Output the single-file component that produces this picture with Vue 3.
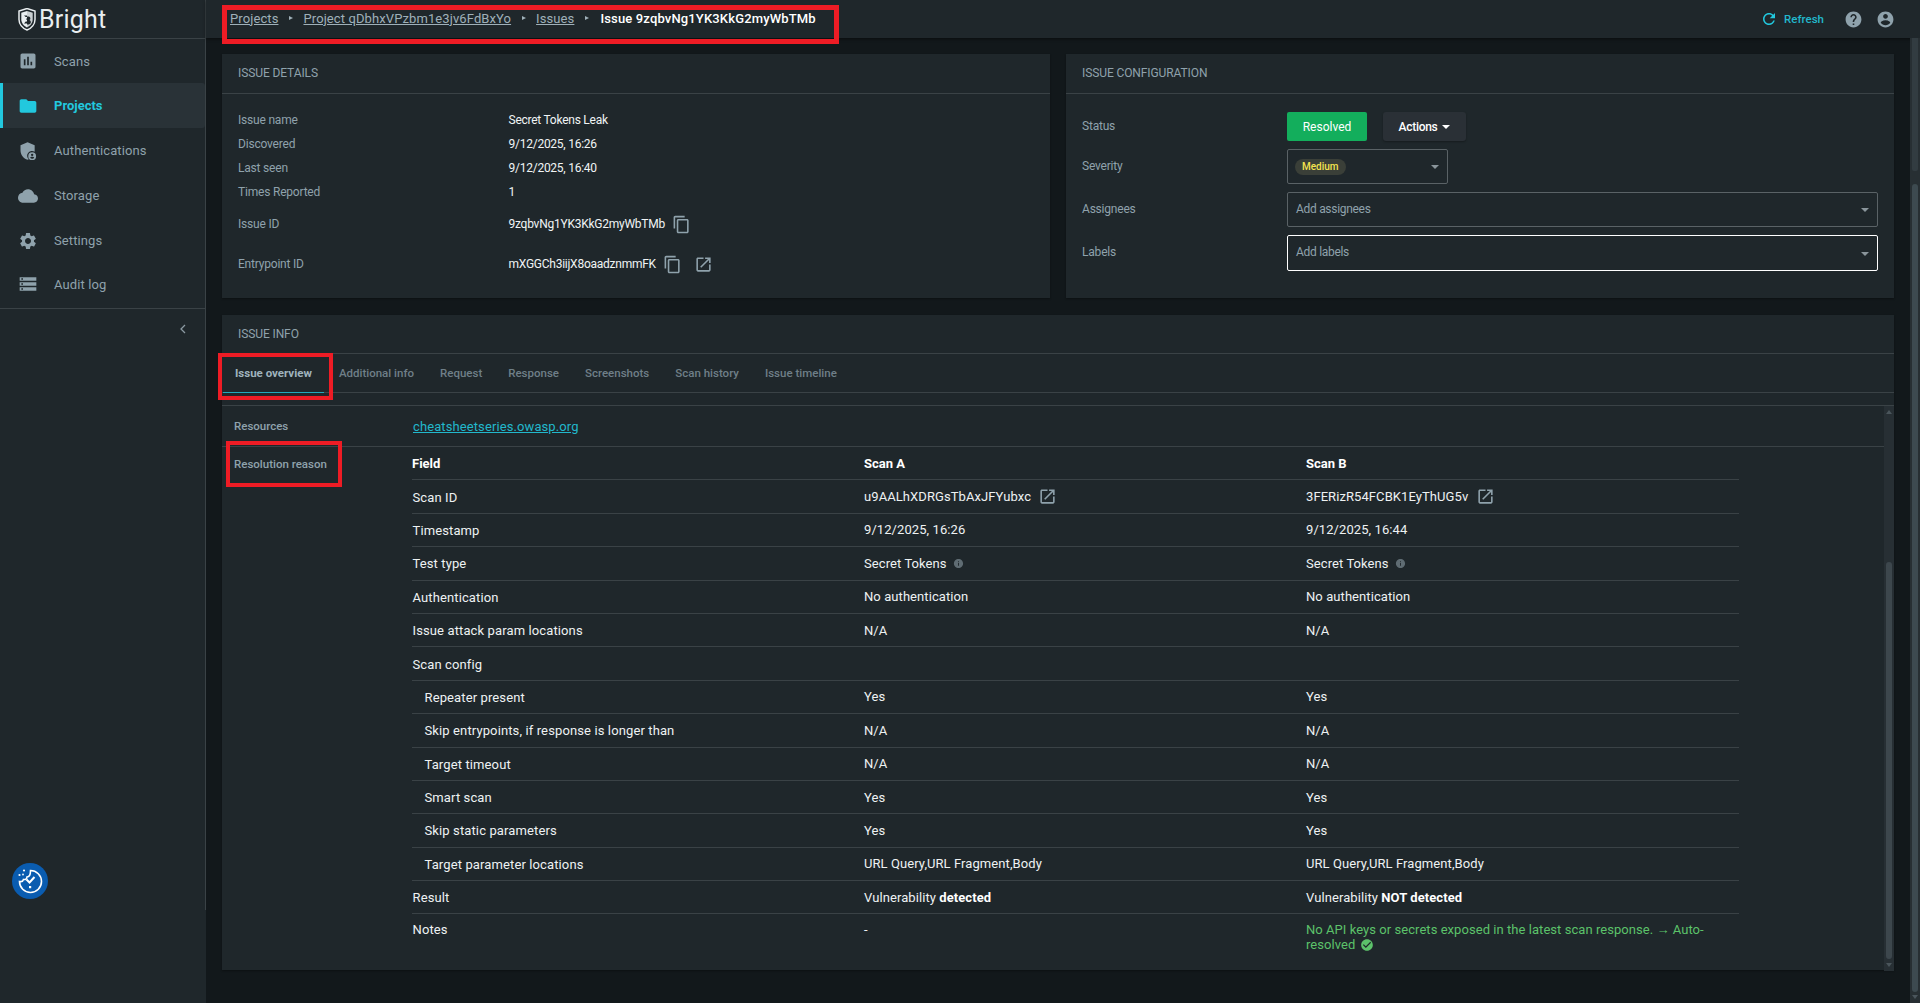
<script setup>
const P = {
  scans: 'M19 3H5c-1.1 0-2 .9-2 2v14c0 1.1.9 2 2 2h14c1.1 0 2-.9 2-2V5c0-1.1-.9-2-2-2zM9 17H7v-7h2v7zm4 0h-2V7h2v10zm4 0h-2v-4h2v4z',
  folder: 'M10 4H4c-1.1 0-1.99.9-1.99 2L2 18c0 1.1.9 2 2 2h16c1.1 0 2-.9 2-2V8c0-1.1-.9-2-2-2h-8l-2-2z',
  auth: 'M11.5 1.5L3 5v6c0 5.3 3.6 10.2 8.5 11.5.5-.1 1-.3 1.5-.5-1.2-1-2-2.5-2-4.2 0-3.2 2.6-5.8 5.8-5.8 1.1 0 2.2.3 3.2.9V5l-8.500-3.500zM17 13.500a4.700 4.700 0 1 0 0 9.400 4.700 4.700 0 0 0 0-9.400zm0 1.700a1.400 1.400 0 1 1 0 2.800 1.400 1.400 0 0 1 0-2.800zm0 6c-1 0-1.900-.5-2.400-1.200.1-.8 1.600-1.200 2.400-1.200s2.300.4 2.400 1.200c-.5.700-1.400 1.200-2.400 1.200z',
  cloud: 'M19.35 10.04C18.67 6.59 15.64 4 12 4 9.11 4 6.6 5.64 5.35 8.04 2.34 8.36 0 10.91 0 14c0 3.31 2.69 6 6 6h13c2.76 0 5-2.24 5-5 0-2.64-2.05-4.78-4.65-4.96z',
  gear: 'M19.14 12.94c.04-.3.06-.61.06-.94 0-.32-.02-.64-.07-.94l2.03-1.58c.18-.14.23-.41.12-.61l-1.92-3.32c-.12-.22-.37-.29-.59-.22l-2.39.96c-.5-.38-1.03-.7-1.62-.94l-.36-2.54c-.04-.24-.24-.41-.48-.41h-3.84c-.24 0-.43.17-.47.41l-.36 2.54c-.59.24-1.13.57-1.62.94l-2.39-.96c-.22-.08-.47 0-.59.22L2.74 8.87c-.12.21-.08.47.12.61l2.03 1.58c-.05.3-.09.63-.09.94s.02.64.07.94l-2.03 1.58c-.18.14-.23.41-.12.61l1.92 3.32c.12.22.37.29.59.22l2.39-.96c.5.38 1.03.7 1.62.94l.36 2.54c.05.24.24.41.48.41h3.84c.24 0 .44-.17.47-.41l.36-2.54c.59-.24 1.13-.56 1.62-.94l2.39.96c.22.08.47 0 .59-.22l1.92-3.32c.12-.22.07-.47-.12-.61l-2.01-1.58zM12 15.6c-1.98 0-3.6-1.62-3.6-3.6s1.62-3.6 3.6-3.6 3.6 1.62 3.6 3.6-1.62 3.6-3.6 3.6z',
  log: 'M2 20h20v-4H2v4zm2-3h2v2H4v-2zM2 4v4h20V4H2zm4 3H4V5h2v2zm-4 7h20v-4H2v4zm2-3h2v2H4v-2z',
  copy: 'M16 1H4c-1.1 0-2 .9-2 2v14h2V3h12V1zm3 4H8c-1.1 0-2 .9-2 2v14c0 1.1.9 2 2 2h11c1.1 0 2-.9 2-2V7c0-1.1-.9-2-2-2zm0 16H8V7h11v14z',
  open: 'M19 19H5V5h7V3H5c-1.11 0-2 .9-2 2v14c0 1.1.89 2 2 2h14c1.1 0 2-.9 2-2v-7h-2v7zM14 3v2h3.59l-9.83 9.83 1.41 1.41L19 6.41V10h2V3h-7z',
  refresh: 'M17.65 6.35C16.2 4.9 14.21 4 12 4c-4.42 0-7.99 3.58-7.99 8s3.57 8 7.99 8c3.73 0 6.84-2.55 7.73-6h-2.08c-.82 2.33-3.04 4-5.65 4-3.31 0-6-2.69-6-6s2.69-6 6-6c1.66 0 3.14.69 4.22 1.78L13 11h7V4l-2.35 2.35z',
  help: 'M12 2C6.48 2 2 6.48 2 12s4.48 10 10 10 10-4.48 10-10S17.52 2 12 2zm1 17h-2v-2h2v2zm2.07-7.75l-.9.92C13.45 12.9 13 13.5 13 15h-2v-.5c0-1.1.45-2.1 1.17-2.83l1.24-1.26c.37-.36.59-.86.59-1.41 0-1.1-.9-2-2-2s-2 .9-2 2H8c0-2.21 1.79-4 4-4s4 1.79 4 4c0 .88-.36 1.68-.93 2.25z',
  user: 'M12 2C6.48 2 2 6.48 2 12s4.48 10 10 10 10-4.48 10-10S17.52 2 12 2zm0 3c1.66 0 3 1.34 3 3s-1.34 3-3 3-3-1.34-3-3 1.34-3 3-3zm0 14.2c-2.5 0-4.71-1.28-6-3.22.03-1.99 4-3.08 6-3.08 1.99 0 5.97 1.09 6 3.08-1.29 1.94-3.5 3.22-6 3.22z',
  check: 'M12 2C6.48 2 2 6.48 2 12s4.48 10 10 10 10-4.48 10-10S17.52 2 12 2zm-2 15l-5-5 1.41-1.41L10 14.17l7.59-7.59L19 8l-9 9z',
  info: 'M12 2C6.48 2 2 6.48 2 12s4.48 10 10 10 10-4.48 10-10S17.52 2 12 2zm1 15h-2v-6h2v6zm0-8h-2V7h2v2z',
}
const nav = [
  { label: 'Scans', icon: 'scans' },
  { label: 'Projects', icon: 'folder', active: true },
  { label: 'Authentications', icon: 'auth' },
  { label: 'Storage', icon: 'cloud' },
  { label: 'Settings', icon: 'gear' },
  { label: 'Audit log', icon: 'log' },
]
const crumbs = ['Projects', 'Project qDbhxVPzbm1e3jv6FdBxYo', 'Issues']
const details = [
  ['Issue name', 'Secret Tokens Leak'],
  ['Discovered', '9/12/2025, 16:26'],
  ['Last seen', '9/12/2025, 16:40'],
  ['Times Reported', '1'],
]
const tabs = ['Issue overview', 'Additional info', 'Request', 'Response', 'Screenshots', 'Scan history', 'Issue timeline']
const rows = [
  { f: 'Scan ID', a: 'u9AALhXDRGsTbAxJFYubxc', b: '3FERizR54FCBK1EyThUG5v', link: true },
  { f: 'Timestamp', a: '9/12/2025, 16:26', b: '9/12/2025, 16:44' },
  { f: 'Test type', a: 'Secret Tokens', b: 'Secret Tokens', info: true },
  { f: 'Authentication', a: 'No authentication', b: 'No authentication' },
  { f: 'Issue attack param locations', a: 'N/A', b: 'N/A' },
  { f: 'Scan config', a: '', b: '' },
  { f: 'Repeater present', a: 'Yes', b: 'Yes', sub: true },
  { f: 'Skip entrypoints, if response is longer than', a: 'N/A', b: 'N/A', sub: true },
  { f: 'Target timeout', a: 'N/A', b: 'N/A', sub: true },
  { f: 'Smart scan', a: 'Yes', b: 'Yes', sub: true },
  { f: 'Skip static parameters', a: 'Yes', b: 'Yes', sub: true },
  { f: 'Target parameter locations', a: 'URL Query,URL Fragment,Body', b: 'URL Query,URL Fragment,Body', sub: true },
]
</script>

<template>
  <div class="app">
    <aside class="sidebar">
      <div class="logo">
        <svg class="logo-mark" viewBox="0 0 18 23" width="18" height="23">
          <path d="M9 .5L1 3v8.500c0 4.500 3.300 8.700 8 10.500 4.700-1.800 8-6 8-10.500V3z" fill="none" stroke="#e9eef0" stroke-width="1.500" />
          <path d="M9 3L3.300 4.800v6.700c0 3.300 2.400 6.500 5.700 8z" fill="#e9eef0" />
          <path d="M6 7.500h4.800a2 2 0 0 1 .7 3.600 2.300 2.300 0 0 1-.7 4.400H6l1.700-2h3a.7.7 0 0 0 0-1.500H8.500v-1.700h2.300a.6.600 0 0 0 0-1.200H7.700z" fill="#1f272b" />
          <path d="M9 3l5.700 1.800v6.700c0 3.300-2.400 6.500-5.700 8v-3h1.800a2.300 2.300 0 0 0 .7-4.400 2 2 0 0 0-.7-3.600H9z" fill="#e9eef0" opacity=".85" />
        </svg>
        <span class="logo-text">Bright</span>
      </div>
      <nav class="nav">
        <div v-for="n in nav" :key="n.label" class="nav-item" :class="{ active: n.active }">
          <svg class="nav-icon" viewBox="0 0 24 24" width="20" height="20"><path :d="P[n.icon]" /></svg>
          <span>{{ n.label }}</span>
        </div>
      </nav>
      <div class="collapse">
        <svg viewBox="0 0 10 14" width="8" height="12"><path d="M7.500 2L2.500 7l5 5" fill="none" stroke="#8b9aa2" stroke-width="1.600" /></svg>
      </div>
      <div class="a11y">
        <svg viewBox="0 0 36 36" width="36" height="36">
          <circle cx="18" cy="18" r="18" fill="#0a5cb0" />
          <path d="M18.500 7.500a11 11 0 1 1-11 11c2 .5 3.500-.3 4-2 2 .3 3.500-.7 3.500-2.500 2 0 3.500-2.500 3.500-6.500z" fill="none" stroke="#fff" stroke-width="1.600" />
          <path d="M14.500 16.500l3 3 5-5.500" fill="none" stroke="#fff" stroke-width="2" />
          <rect x="17" y="23" width="2.200" height="2.200" fill="#fff" />
          <circle cx="12" cy="7.500" r="1.100" fill="#fff" />
          <circle cx="7.500" cy="12" r="1.100" fill="#fff" />
          <circle cx="11" cy="11.500" r=".9" fill="#fff" />
        </svg>
      </div>
    </aside>

    <div class="main">
      <header class="topbar">
        <div class="crumbs">
          <template v-for="c in crumbs" :key="c">
            <a class="crumb">{{ c }}</a>
            <span class="sep"></span>
          </template>
          <span class="crumb-current">Issue 9zqbvNg1YK3KkG2myWbTMb</span>
        </div>
        <div class="top-actions">
          <svg class="refresh-ic" viewBox="0 0 24 24" width="18" height="18"><path :d="P.refresh" /></svg>
          <span class="refresh">Refresh</span>
          <svg class="top-ic first" viewBox="0 0 24 24" width="19" height="19"><path :d="P.help" /></svg>
          <svg class="top-ic" viewBox="0 0 24 24" width="19" height="19"><path :d="P.user" /></svg>
        </div>
      </header>

      <div class="scroll-wrap">
        <div class="content">
          <div class="top-panels">
            <section class="panel">
              <h2 class="panel-title">ISSUE DETAILS</h2>
              <div class="details">
                <div v-for="d in details" :key="d[0]" class="d-row">
                  <span class="d-label">{{ d[0] }}</span><span class="d-val">{{ d[1] }}</span>
                </div>
                <div class="d-row id-row">
                  <span class="d-label">Issue ID</span>
                  <span class="d-val">9zqbvNg1YK3KkG2myWbTMb</span>
                  <svg class="tool first" viewBox="0 0 24 24" width="19" height="19"><path :d="P.copy" /></svg>
                </div>
                <div class="d-row id-row second">
                  <span class="d-label">Entrypoint ID</span>
                  <span class="d-val">mXGGCh3iijX8oaadznmmFK</span>
                  <svg class="tool first" viewBox="0 0 24 24" width="19" height="19"><path :d="P.copy" /></svg>
                  <svg class="tool" viewBox="0 0 24 24" width="19" height="19"><path :d="P.open" /></svg>
                </div>
              </div>
            </section>

            <section class="panel">
              <h2 class="panel-title">ISSUE CONFIGURATION</h2>
              <div class="config">
                <div class="c-label status-l">Status</div>
                <div class="status-ctl">
                  <div class="btn-resolved">Resolved</div>
                  <div class="btn-actions">Actions<span class="caret white"></span></div>
                </div>
                <div class="c-label">Severity</div>
                <div class="select small">
                  <span class="pill">Medium</span><span class="caret"></span>
                </div>
                <div class="c-label">Assignees</div>
                <div class="select"><span class="ph">Add assignees</span><span class="caret"></span></div>
                <div class="c-label">Labels</div>
                <div class="select focused"><span class="ph">Add labels</span><span class="caret"></span></div>
              </div>
            </section>
          </div>

          <section class="panel info-panel">
            <h2 class="panel-title info-title">ISSUE INFO</h2>
            <div class="tabs">
              <div v-for="(t, i) in tabs" :key="t" class="tab" :class="{ on: i === 0 }">{{ t }}</div>
            </div>
            <div class="tab-body">
              <div class="res-row">
                <span class="side-label">Resources</span>
                <a class="res-link">cheatsheetseries.owasp.org</a>
              </div>
              <div class="reason">
                <span class="side-label reason-label">Resolution reason</span>
                <div class="table">
                  <div class="tr head">
                    <div class="field-h">Field</div><div>Scan A</div><div>Scan B</div>
                  </div>
                  <div v-for="r in rows" :key="r.f" class="tr">
                    <div class="field" :class="{ sub: r.sub }">{{ r.f }}</div>
                    <div class="cell">
                      {{ r.a }}
                      <svg v-if="r.link" class="tool lnk" viewBox="0 0 24 24" width="19" height="19"><path :d="P.open" /></svg>
                      <svg v-if="r.info" class="inf" viewBox="0 0 24 24" width="11" height="11"><path :d="P.info" /></svg>
                    </div>
                    <div class="cell">
                      {{ r.b }}
                      <svg v-if="r.link" class="tool lnk" viewBox="0 0 24 24" width="19" height="19"><path :d="P.open" /></svg>
                      <svg v-if="r.info" class="inf" viewBox="0 0 24 24" width="11" height="11"><path :d="P.info" /></svg>
                    </div>
                  </div>
                  <div class="tr">
                    <div class="field">Result</div>
                    <div class="cell"><span>Vulnerability <b>detected</b></span></div>
                    <div class="cell"><span>Vulnerability <b>NOT detected</b></span></div>
                  </div>
                  <div class="tr notes">
                    <div class="field">Notes</div>
                    <div class="cell">-</div>
                    <div class="note-text">No API keys or secrets exposed in the latest scan response. → Auto-resolved <svg class="ok" viewBox="0 0 24 24" width="14" height="14"><path :d="P.check" /></svg></div>
                  </div>
                </div>
              </div>
              <div class="inner-bar">
                <span class="arrow up"></span>
                <div class="inner-thumb"></div>
                <span class="arrow down"></span>
              </div>
            </div>
          </section>
        </div>
        <div class="outer-bar">
          <div class="outer-thumb top"></div>
          <div class="outer-thumb"></div>
          <span class="arrow down"></span>
        </div>
      </div>

      <div class="mark m1"></div>
      <div class="mark m2"></div>
      <div class="mark m3"></div>
    </div>
  </div>
</template>

<style>
html, body { margin: 0; background: #12181b; overflow: hidden; }
</style>

<style scoped>
.app {
  display: flex; width: 1920px; height: 1003px; overflow: hidden;
  font-family: Roboto, "Liberation Sans", sans-serif; font-size: 13px; color: #e8edef;
  background: #12181b;
}
.sidebar {
  width: 206px; flex: none; position: relative; box-sizing: border-box;
  background: linear-gradient(#3a4246, #3a4246) right top / 1px 910px no-repeat, #1f272b;
}
.logo { height: 39px; box-sizing: border-box; border-bottom: 1px solid #3a4246; display: flex; align-items: center; padding-left: 18px; margin-right: 1px; }
.logo-text { font-size: 25px; color: #e9eef0; margin-left: 3px; line-height: 1; letter-spacing: .2px; }
.nav { border-bottom: 1px solid #3a4246; margin-right: 1px; padding-bottom: 1px; }
.nav-item { height: 45px; display: flex; align-items: center; color: #8fa2ac; box-sizing: border-box; padding-left: 18px; letter-spacing: .1px; }
.nav-item:first-child { height: 44px; }
.nav-item span { margin-left: 16px; }
.nav-item:last-child { height: 44px; padding-bottom: 2px; }
.nav-icon { fill: #8fa2ac; flex: none; }
.nav-item.active { background: #293237; border-left: 3px solid #22c8de; padding-left: 15px; color: #22c8de; font-weight: 700; border-radius: 0 3px 3px 0; letter-spacing: 0; }
.nav-item.active .nav-icon { fill: #22c8de; }
.collapse { display: flex; justify-content: flex-end; padding: 14px 19px 0 0; }
.a11y { position: absolute; left: 12px; top: 863px; width: 36px; height: 36px; }

.main { flex: 1; display: flex; flex-direction: column; position: relative; min-width: 0; }
.topbar { height: 38px; flex: none; background: #1f272b; display: flex; justify-content: space-between; align-items: center; box-shadow: 0 1px 3px rgba(0,0,0,.5); position: relative; box-sizing: border-box; padding: 0 25px 0 24px; }
.crumbs { display: flex; align-items: center; height: 36px; padding-bottom: 2px; box-sizing: content-box; }
.crumb { color: #9fb0b9; text-decoration: underline; font-size: 13px; letter-spacing: .1px; }
.sep { width: 0; height: 0; border-left: 4px solid #9fb0b9; border-top: 2.500px solid transparent; border-bottom: 2.500px solid transparent; margin: 0 10px 0 11px; }
.crumb-current { color: #fff; font-weight: 500; font-size: 13px; letter-spacing: .15px; margin-left: 1px; }
.top-actions { display: flex; align-items: center; }
.refresh-ic { fill: #22c8de; }
.refresh { color: #22b8cc; font-size: 11.500px; font-weight: 500; margin-left: 6px; }
.top-ic { fill: #8fa2ac; margin-left: 13px; }
.top-ic.first { margin-left: 20px; }

.scroll-wrap { flex: 1; display: flex; min-height: 0; }
.content { flex: 1; padding: 16px 16px 0; min-width: 0; }
.top-panels { display: grid; grid-template-columns: 1fr 1fr; gap: 16px; height: 244px; }
.panel { background: #1f272b; box-shadow: 0 1px 2px rgba(0,0,0,.35); }
.panel-title { margin: 0; height: 39px; line-height: 38px; box-sizing: content-box; padding-left: 16px; font-size: 12px; font-weight: 400; color: #8fa2ac; border-bottom: 1px solid #3a4246; letter-spacing: -.1px; }
.details { padding-top: 14px; }
.d-row { display: flex; align-items: center; height: 24px; padding-left: 16px; }
.d-label { width: 270.500px; flex: none; color: #8fa2ac; font-size: 12px; letter-spacing: -.2px; }
.d-val { color: #f0f4f5; font-size: 12px; letter-spacing: -.25px; }
.id-row { margin-top: 8px; }
.id-row.second { margin-top: 16px; }
.tool { fill: #8fa2ac; flex: none; margin-left: 12px; }
.tool.first { margin-left: 7px; }

.config { display: grid; grid-template-columns: 205px 591px; padding: 18px 0 0 16px; align-items: center; row-gap: 8px; }
.c-label { color: #8fa2ac; font-size: 12px; letter-spacing: -.2px; padding-bottom: 2px; }
.status-ctl { display: flex; gap: 16px; height: 29px; }
.btn-resolved { width: 80px; background: #13ae5c; color: #fff; border-radius: 2px; font-size: 12px; font-weight: 400; display: flex; align-items: center; justify-content: center; }
.btn-actions { width: 83px; background: #2a3036; color: #fff; border-radius: 3px; font-size: 12px; font-weight: 500; letter-spacing: -.3px; display: flex; align-items: center; justify-content: center; box-shadow: 0 1px 2px rgba(0,0,0,.3); }
.select { height: 35px; border: 1px solid #5a6266; border-radius: 2px; box-sizing: border-box; display: flex; align-items: center; justify-content: space-between; padding: 0 8px; }
.select.small { width: 161px; }
.select.focused { border-color: #fff; height: 36px; }
.ph { color: #8fa2ac; font-size: 12px; letter-spacing: -.3px; padding-bottom: 2px; }
.pill { background: #3a3f38; color: #f3e34f; font-size: 10px; border-radius: 8px; height: 16px; line-height: 16px; padding: 0 7px; font-weight: 500; margin-left: -1px; }
.caret { width: 0; height: 0; border-top: 4px solid #8a959b; border-left: 4px solid transparent; border-right: 4px solid transparent; margin-top: 1px; }
.caret.white { border-top-color: #fff; margin-left: 5px; }

.info-panel { margin-top: 17px; height: 655px; }
.info-title { height: 38px; line-height: 38px; }
.tabs { display: flex; height: 39px; box-sizing: border-box; padding-left: 1px; border-bottom: 1px solid #3a4246; }
.tab { padding: 0 13px; line-height: 38px; font-size: 11.500px; font-weight: 500; color: #6f7f88; white-space: nowrap; }
.tab.on { color: #9fb3bd; font-weight: 700; border-bottom: 1px solid #22a9bd; padding: 0 12px; margin-bottom: -1px; margin-right: 2px; height: 38px; }
.tab-body { position: relative; margin-top: 12px; height: 565px; border-top: 1px solid #3a4246; }
.res-row { display: flex; align-items: center; height: 40px; margin-right: 10px; border-bottom: 1px solid #3a4246; }
.side-label { width: 178px; flex: none; padding-left: 12px; box-sizing: border-box; color: #8fa2ac; font-size: 11.500px; font-weight: 500; }
.res-link { color: #22b8cc; text-decoration: underline; font-size: 13px; margin-left: 13px; letter-spacing: .1px; }
.reason { display: flex; }
.reason-label { padding-top: 10px; line-height: 14px; height: 30px; }
.table { width: 1327px; margin-left: 12px; font-size: 13px; }
.tr { display: grid; grid-template-columns: 452px 442px 1fr; align-items: center; height: 33.400px; box-sizing: border-box; border-bottom: 1px solid #3a4246; }
.head { font-weight: 700; color: #fff; }
.field { color: #eef2f3; letter-spacing: .12px; padding-top: 1px; padding-left: .5px; }
.field.sub { padding-left: 12.500px; }
.cell { display: flex; align-items: center; color: #eef2f3; white-space: pre-wrap; letter-spacing: .08px; }
.cell b { font-weight: 700; color: #fff; }
.lnk { margin-left: 4px; }
.inf { fill: #5f6c73; margin-left: 3px; }
.notes { border-bottom: 0; align-items: start; padding-top: 8px; height: 54px; }
.notes .field { padding-top: 0; }
.note-text { color: #5cc26a; line-height: 15px; font-size: 13px; padding-right: 26px; letter-spacing: .05px; }
.ok { fill: #5cc26a; vertical-align: -3px; margin-left: 1px; }
.arrow { position: absolute; left: 2px; width: 0; height: 0; border-left: 3.500px solid transparent; border-right: 3.500px solid transparent; }
.arrow.up { top: 4px; border-bottom: 4px solid #4a555b; }
.arrow.down { bottom: 4px; border-top: 4px solid #4a555b; }
.inner-bar { position: absolute; right: 0; top: 0; bottom: 0; width: 10px; background: #272f34; }
.inner-thumb { position: absolute; left: 2px; right: 2px; top: 156px; bottom: 12px; background: #3d474d; border-radius: 3px; }
.outer-bar { width: 10px; flex: none; background: #272f33; position: relative; }
.outer-thumb { position: absolute; left: 2px; right: 2px; top: 146px; bottom: 11px; background: #3d4a50; border-radius: 3px; }
.outer-thumb.top { top: 0; bottom: auto; height: 133px; background: #323c41; border-radius: 0 0 2px 2px; }

.mark { position: absolute; border: 5px solid #ee1c25; box-sizing: border-box; pointer-events: none; }
.m1 { left: 16px; top: 5px; width: 617px; height: 39px; }
.m2 { left: 12px; top: 353px; width: 115px; height: 47px; border-width: 4px; }
.m3 { left: 20px; top: 441px; width: 116px; height: 46px; border-width: 4px; }
</style>
